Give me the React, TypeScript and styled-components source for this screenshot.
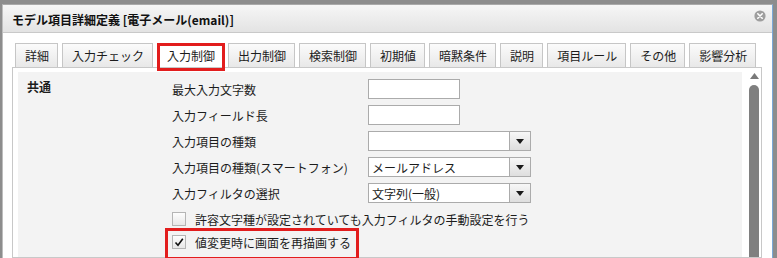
import React from 'react';
import styled, { createGlobalStyle } from 'styled-components';

const Global = createGlobalStyle`
  html, body { margin: 0; padding: 0; height: 258px; overflow: hidden; background: #8d8d8d; }
  body { font-family: "Noto Sans CJK JP", "Noto Sans", sans-serif; font-size: 12px; color: #1c1c1c; }
  #root { height: 258px; }
`;

const Dialog = styled.div`
  margin: 4px 0 0 2px;
  width: 771px;
  height: 254px;
  box-sizing: border-box;
  background: #fff;
  border-top: 1px solid #a9a9a9;
  border-left: 1px solid #bdbdbd;
  border-right: 1px solid #7aa8d9;
  display: flex;
  flex-direction: column;
`;

const TitleBar = styled.div`
  height: 27px;
  flex: none;
  display: flex;
  align-items: flex-start;
  justify-content: space-between;
  padding: 0 6px 0 9px;
  background: linear-gradient(#f6f6f6, #e3e3e3);
  border-bottom: 1px solid #c9c9c9;
`;

const TitleText = styled.div`
  margin-top: 7px;
  line-height: 16px;
  font-weight: bold;
  font-size: 12px;
  color: #111;
`;

const CloseButton = styled.div`
  margin-top: 5px;
  width: 12px;
  height: 12px;
  display: flex;
`;

const Body = styled.div`
  flex: 1;
  display: flex;
  flex-direction: column;
  padding: 0 10px 0 9px;
  min-height: 0;
`;

const TabStrip = styled.div`
  display: flex;
  gap: 4px;
  padding: 10px 0 0 3px;
  flex: none;
`;

const Tab = styled.div<{ $active?: boolean; $marked?: boolean }>`
  position: relative;
  height: 24px;
  box-sizing: border-box;
  padding: 0 8px 0 9px;
  display: flex;
  align-items: center;
  font-size: 12px;
  line-height: 1;
  white-space: nowrap;
  border: 1px solid #c6c6c6;
  border-bottom: none;
  background: ${(p) => (p.$active ? '#ffffff' : 'linear-gradient(#fbfbfb, #e8e8e8)')};
  &::after {
    content: ${(p) => (p.$marked ? "''" : 'none')};
    position: absolute;
    top: -1px;
    left: -1px;
    right: -2px;
    bottom: -4px;
    border: 3px solid #e21d1d;
    z-index: 2;
  }
`;

const Panel = styled.div`
  flex: 1;
  display: flex;
  border: 1px solid #c8c8c8;
  background: #fff;
  min-height: 0;
`;

const Content = styled.div`
  flex: 1;
  margin: 4px 0 0 5px;
  padding-top: 7px;
  background: #f3f3f3;
  display: grid;
  grid-template-columns: 154px 1fr;
  align-content: start;
`;

const SectionLabel = styled.div`
  padding-left: 9px;
  font-weight: bold;
  line-height: 16px;
`;

const Form = styled.div`
  display: flex;
  flex-direction: column;
  gap: 6px;
`;

const FieldRow = styled.div`
  display: flex;
  align-items: center;
  height: 20px;
`;

const FieldLabel = styled.div`
  width: 196px;
  white-space: nowrap;
`;

const TextBox = styled.div`
  width: 92px;
  height: 20px;
  box-sizing: border-box;
  border: 1px solid #ababab;
  background: #fff;
`;

const Select = styled.div`
  width: 163px;
  height: 20px;
  box-sizing: border-box;
  border: 1px solid #ababab;
  background: #fff;
  display: flex;
`;

const SelectValue = styled.div`
  flex: 1;
  padding-left: 3px;
  display: flex;
  align-items: center;
  white-space: nowrap;
`;

const DropButton = styled.div`
  width: 21px;
  box-sizing: border-box;
  border-left: 1px solid #ababab;
  background: linear-gradient(#f7f7f7, #dedede);
  display: flex;
  align-items: center;
  justify-content: center;
`;

const CheckGroup = styled.div`
  display: flex;
  flex-direction: column;
  gap: 3px;
`;

const CheckRow = styled.div<{ $marked?: boolean }>`
  position: relative;
  align-self: flex-start;
  height: 20px;
  display: flex;
  align-items: center;
  gap: 9px;
  white-space: nowrap;
  &::after {
    content: ${(p) => (p.$marked ? "''" : 'none')};
    position: absolute;
    top: -4px;
    left: -7px;
    right: -8px;
    bottom: -8px;
    border: 3px solid #e21d1d;
  }
`;

const CheckBox = styled.div`
  width: 14px;
  height: 14px;
  box-sizing: border-box;
  border: 1px solid #b5b5b5;
  background: linear-gradient(#fdfdfd, #e8e8e8);
  display: flex;
  align-items: center;
  justify-content: center;
`;

const ScrollBar = styled.div`
  width: 19px;
  flex: none;
  background: #fff;
  padding-left: 7px;
  box-sizing: border-box;
  display: flex;
  flex-direction: column;
`;

const ScrollArrow = styled.div`
  margin-top: 5px;
  width: 10px;
  height: 6px;
  display: flex;
  justify-content: center;
`;

const ScrollThumb = styled.div`
  margin-top: 6px;
  width: 10px;
  flex: 1;
  background: #7f7f7f;
  border-radius: 5px 5px 0 0;
`;

const tabs = ['詳細', '入力チェック', '入力制御', '出力制御', '検索制御', '初期値', '暗黙条件', '説明', '項目ルール', 'その他', '影響分析'];

type Field = { label: string; kind: 'text' | 'select'; value?: string };
const fields: Field[] = [
  { label: '最大入力文字数', kind: 'text' },
  { label: '入力フィールド長', kind: 'text' },
  { label: '入力項目の種類', kind: 'select', value: '' },
  { label: '入力項目の種類(スマートフォン)', kind: 'select', value: 'メールアドレス' },
  { label: '入力フィルタの選択', kind: 'select', value: '文字列(一般)' },
];

const checks = [
  { label: '許容文字種が設定されていても入力フィルタの手動設定を行う', checked: false, marked: false },
  { label: '値変更時に画面を再描画する', checked: true, marked: true },
];

export default function App() {
  return (
    <>
      <Global />
      <Dialog>
        <TitleBar>
          <TitleText>モデル項目詳細定義 [電子メール(email)]</TitleText>
          <CloseButton>
            <svg width="12" height="12" viewBox="0 0 12 12">
              <circle cx="6" cy="6" r="5.6" fill="#9e9e9e" />
              <path d="M3.8 3.8 L8.2 8.2 M8.2 3.8 L3.8 8.2" stroke="#fff" strokeWidth="1.6" strokeLinecap="round" />
            </svg>
          </CloseButton>
        </TitleBar>
        <Body>
          <TabStrip>
            {tabs.map((t) => (
              <Tab key={t} $active={t === '入力制御'} $marked={t === '入力制御'}>
                {t}
              </Tab>
            ))}
          </TabStrip>
          <Panel>
            <Content>
              <SectionLabel>共通</SectionLabel>
              <Form>
                {fields.map((f) => (
                  <FieldRow key={f.label}>
                    <FieldLabel>{f.label}</FieldLabel>
                    {f.kind === 'text' ? (
                      <TextBox />
                    ) : (
                      <Select>
                        <SelectValue>{f.value}</SelectValue>
                        <DropButton>
                          <svg width="8" height="5" viewBox="0 0 8 5">
                            <polygon points="0,0 8,0 4,5" fill="#1a1a1a" />
                          </svg>
                        </DropButton>
                      </Select>
                    )}
                  </FieldRow>
                ))}
                <CheckGroup>
                  {checks.map((c) => (
                    <CheckRow key={c.label} $marked={c.marked}>
                      <CheckBox>
                        {c.checked && (
                          <svg width="12" height="12" viewBox="0 0 12 12">
                            <path d="M2.5 6.5 L5 9.3 L9.8 2.8" stroke="#111" strokeWidth="1.6" fill="none" />
                          </svg>
                        )}
                      </CheckBox>
                      <span>{c.label}</span>
                    </CheckRow>
                  ))}
                </CheckGroup>
              </Form>
            </Content>
            <ScrollBar>
              <ScrollArrow>
                <svg width="9" height="6" viewBox="0 0 9 6">
                  <polygon points="4.5,0 9,6 0,6" fill="#7a7a7a" />
                </svg>
              </ScrollArrow>
              <ScrollThumb />
            </ScrollBar>
          </Panel>
        </Body>
      </Dialog>
    </>
  );
}
